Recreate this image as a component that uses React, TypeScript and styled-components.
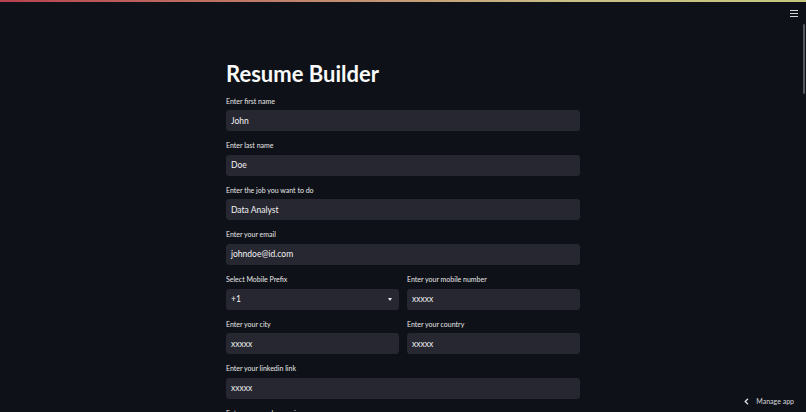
import React from "react";
import styled, { createGlobalStyle } from "styled-components";

const Global = createGlobalStyle`
  html, body { margin: 0; padding: 0; background: #0e1117; overflow: hidden; }
  body { width: 806px; height: 412px; font-family: "Source Sans Pro", "Lato", "Noto Sans", sans-serif; color: #fafafa; }
  * { box-sizing: border-box; }
`;

const Page = styled.div`
  position: relative;
  width: 806px;
  height: 412px;
  overflow: hidden;
  background: #0e1117;
`;

const Decoration = styled.div`
  position: absolute;
  top: 0;
  left: 0;
  right: 0;
  height: 2px;
  background: linear-gradient(90deg, #b8424f, #c9bf86 70%, #c6c77c);
  z-index: 3;
`;

const Header = styled.header`
  position: absolute;
  top: 2px;
  left: 0;
  right: 0;
  height: 22px;
  display: flex;
  justify-content: flex-end;
  align-items: center;
  padding-right: 8px;
  z-index: 2;
`;

const MenuButton = styled.div`
  width: 8px;
  height: 7px;
  display: flex;
  flex-direction: column;
  justify-content: space-between;
  & > span {
    display: block;
    height: 1px;
    background: #d6d6d9;
  }
`;

const ScrollThumb = styled.div`
  position: absolute;
  right: 1px;
  top: 24px;
  width: 2px;
  height: 70px;
  border-radius: 1px;
  background: #55575e;
`;

const Main = styled.main`
  width: 354px;
  margin: 0 auto;
  padding-top: 59.5px;
`;

const Title = styled.h1`
  margin: 0 0 8px 0;
  font-family: "Lato", "Noto Sans", sans-serif;
  font-weight: 700;
  font-size: 22px;
  line-height: 28px;
  color: #fafafa;
`;

const Form = styled.div`
  display: flex;
  flex-direction: column;
  gap: 9.17px;
`;

const Row = styled.div`
  display: grid;
  grid-template-columns: 1fr 1fr;
  gap: 8px;
`;

const Field = styled.div`
  display: flex;
  flex-direction: column;
`;

const Label = styled.label`
  font-family: "Lato", "Noto Sans", sans-serif;
  font-size: 7px;
  line-height: 10px;
  margin-bottom: 4.5px;
  color: #e8e8ea;
  white-space: nowrap;
`;

const InputBox = styled.div`
  height: 21px;
  border-radius: 3px;
  background: #262730;
  display: flex;
  align-items: center;
  justify-content: space-between;
  padding: 0 7px 0 5px;
  font-family: "Lato", "Noto Sans", sans-serif;
  font-size: 8.5px;
  color: #f2f2f4;
`;

const Caret = styled.span`
  width: 0;
  height: 0;
  border-left: 2.5px solid transparent;
  border-right: 2.5px solid transparent;
  border-top: 3px solid #e6e6e8;
`;

const Manage = styled.div`
  position: absolute;
  right: 12px;
  bottom: 7px;
  display: flex;
  align-items: center;
  gap: 7px;
  font-family: "Lato", "Noto Sans", sans-serif;
  font-size: 7px;
  color: #d8d8dc;
`;

type FieldProps = { label: string; value: string; select?: boolean };

const TextField = ({ label, value, select }: FieldProps) => (
  <Field>
    <Label>{label}</Label>
    <InputBox>
      <span>{value}</span>
      {select && <Caret />}
    </InputBox>
  </Field>
);

export default function App() {
  return (
    <Page>
      <Global />
      <Decoration />
      <Header>
        <MenuButton>
          <span />
          <span />
          <span />
        </MenuButton>
      </Header>
      <ScrollThumb />
      <Main>
        <Title>Resume Builder</Title>
        <Form>
          <TextField label="Enter first name" value="John" />
          <TextField label="Enter last name" value="Doe" />
          <TextField label="Enter the job you want to do" value="Data Analyst" />
          <TextField label="Enter your email" value="johndoe@id.com" />
          <Row>
            <TextField label="Select Mobile Prefix" value="+1" select />
            <TextField label="Enter your mobile number" value="xxxxx" />
          </Row>
          <Row>
            <TextField label="Enter your city" value="xxxxx" />
            <TextField label="Enter your country" value="xxxxx" />
          </Row>
          <TextField label="Enter your linkedin link" value="xxxxx" />
          <TextField label="Enter your work experience" value="" />
        </Form>
      </Main>
      <Manage>
        <svg width="5" height="7" viewBox="0 0 5 7">
          <path d="M4 0.8 L1.2 3.5 L4 6.2" stroke="#e0e0e4" strokeWidth="1.3" fill="none" />
        </svg>
        <span>Manage app</span>
      </Manage>
    </Page>
  );
}
